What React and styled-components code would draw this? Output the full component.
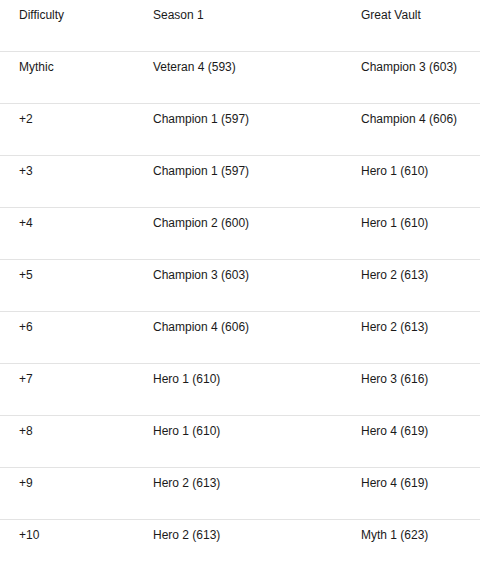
import React from 'react'
import styled, { createGlobalStyle } from 'styled-components'

const GlobalStyle = createGlobalStyle`
  body {
    margin: 0;
    background: #fff;
    font-family: 'Liberation Sans', Arial, sans-serif;
  }
`

const Table = styled.div`
  width: 480px;
  color: #1a1a1a;
  font-size: 12px;
  line-height: 14px;
`

const Row = styled.div`
  display: grid;
  grid-template-columns: 134px 208px 1fr;
  padding: 8px 0 29px 19px;
  border-bottom: ${p => (p.last ? 'none' : '1px solid #e3e3e3')};
`

const Cell = styled.div`
  white-space: nowrap;
`

const rows = [
  ['Mythic', 'Veteran 4 (593)', 'Champion 3 (603)'],
  ['+2', 'Champion 1 (597)', 'Champion 4 (606)'],
  ['+3', 'Champion 1 (597)', 'Hero 1 (610)'],
  ['+4', 'Champion 2 (600)', 'Hero 1 (610)'],
  ['+5', 'Champion 3 (603)', 'Hero 2 (613)'],
  ['+6', 'Champion 4 (606)', 'Hero 2 (613)'],
  ['+7', 'Hero 1 (610)', 'Hero 3 (616)'],
  ['+8', 'Hero 1 (610)', 'Hero 4 (619)'],
  ['+9', 'Hero 2 (613)', 'Hero 4 (619)'],
  ['+10', 'Hero 2 (613)', 'Myth 1 (623)']
]

export default function App() {
  return (
    <>
      <GlobalStyle />
      <Table>
        <Row>
          <Cell>Difficulty</Cell>
          <Cell>Season 1</Cell>
          <Cell>Great Vault</Cell>
        </Row>
        {rows.map((r, i) => (
          <Row key={r[0]} last={i === rows.length - 1}>
            {r.map((c, j) => (
              <Cell key={j}>{c}</Cell>
            ))}
          </Row>
        ))}
      </Table>
    </>
  )
}
